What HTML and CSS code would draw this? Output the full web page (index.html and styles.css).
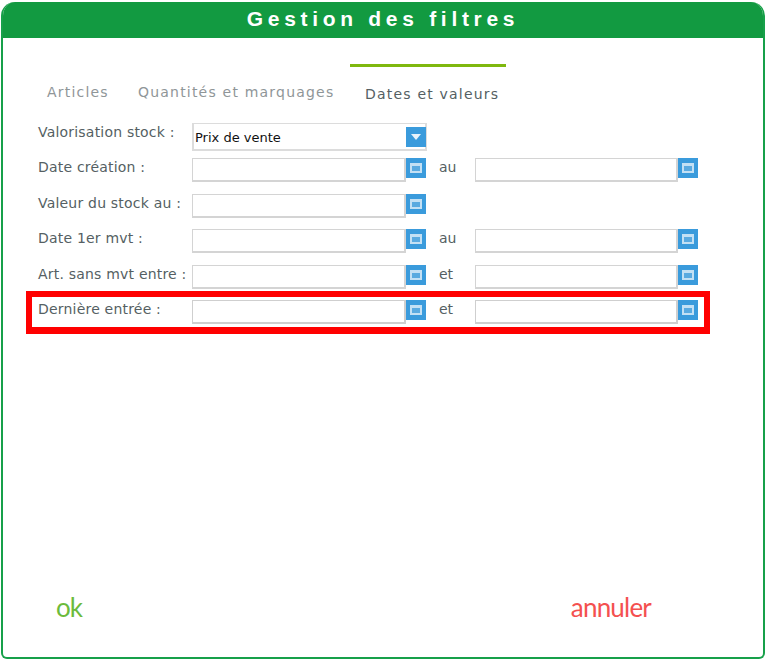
FILE: index.html
```html
<!DOCTYPE html>
<html lang="fr">
<head>
    <meta charset="UTF-8">
    <title>Gestion des filtres</title>
    <link rel="stylesheet" href="styles.css">
</head>
<body>

    <div class="window">
        <h1 class="title">Gestion des filtres</h1>

        <!-- Tabs -->
        <div class="tabs">
            <div class="tab tab-articles">Articles</div>
            <div class="tab tab-quantites">Quantités et marquages</div>
            <div class="tab tab-active">Dates et valeurs</div>
        </div>

        <!-- Filter rows -->
        <div class="form">
            <div class="row row-select">
                <label class="label">Valorisation stock :</label>
                <div class="select">
                    <span class="select-value">Prix de vente</span>
                    <span class="btn btn-select">
                        <svg width="10" height="6" viewBox="0 0 10 6"><path d="M0 0h10L5 6z" fill="#e8f3fb"/></svg>
                    </span>
                </div>
            </div>
            <div class="row">
                <label class="label">Date création :</label>
                <div class="field"><input class="input" type="text"><span class="btn"><i class="cal"></i></span></div>
                <span class="sep">au</span>
                <div class="field field-2"><input class="input" type="text"><span class="btn"><i class="cal"></i></span></div>
            </div>
            <div class="row">
                <label class="label">Valeur du stock au :</label>
                <div class="field"><input class="input" type="text"><span class="btn"><i class="cal"></i></span></div>
            </div>
            <div class="row">
                <label class="label">Date 1er mvt :</label>
                <div class="field"><input class="input" type="text"><span class="btn"><i class="cal"></i></span></div>
                <span class="sep">au</span>
                <div class="field field-2"><input class="input" type="text"><span class="btn"><i class="cal"></i></span></div>
            </div>
            <div class="row">
                <label class="label">Art. sans mvt entre :</label>
                <div class="field"><input class="input" type="text"><span class="btn"><i class="cal"></i></span></div>
                <span class="sep">et</span>
                <div class="field field-2"><input class="input" type="text"><span class="btn"><i class="cal"></i></span></div>
            </div>
            <div class="row row-marked">
                <label class="label">Dernière entrée :</label>
                <div class="field"><input class="input" type="text"><span class="btn"><i class="cal"></i></span></div>
                <span class="sep">et</span>
                <div class="field field-2"><input class="input" type="text"><span class="btn"><i class="cal"></i></span></div>
                <div class="marker"></div>
            </div>
        </div>

        <!-- Actions -->
        <div class="actions">
            <span class="action action-ok">ok</span>
            <span class="action action-cancel">annuler</span>
        </div>
    </div>

</body>
</html>
```

FILE: styles.css
```css
* {
    margin: 0;
    padding: 0;
    box-sizing: border-box;
}

body {
    background-color: #fff;
    padding: 2px 1px;
    font-family: 'DejaVu Sans', sans-serif;
    color: #555f63;
}

.window {
    display: flex;
    flex-direction: column;
    height: 657px;
    border: 2px solid #17a04a;
    border-top: none;
    border-radius: 14px 14px 6px 6px;
    overflow: hidden;
}

.title {
    height: 36px;
    line-height: 34px;
    margin: 0 -2px;
    text-align: center;
    background-color: #129a41;
    color: #fff;
    font-family: 'Liberation Sans', sans-serif;
    font-size: 21px;
    font-weight: bold;
    letter-spacing: 4.7px;
}

.tabs {
    display: flex;
    height: 85px;
    padding-left: 44px;
}

.tab {
    font-size: 14px;
    letter-spacing: 1.2px;
    color: #8f9698;
    padding-top: 46px;
}

.tab-articles {
    width: 91px;
}

.tab-quantites {
    width: 212px;
}

.tab-active {
    width: 156px;
    height: 29px;
    padding-top: 0;
    margin-top: 26px;
    padding-left: 15px;
    border-top: 3px solid #7fb80e;
    color: #555f63;
    line-height: 54px;
    white-space: nowrap;
}

.form {
    display: flex;
    flex-direction: column;
    gap: 11.5px;
    padding-left: 35px;
}

.row {
    position: relative;
    display: flex;
    align-items: flex-start;
    height: 24px;
}

.row-select {
    height: 23.5px;
}

.label {
    width: 154px;
    font-size: 14px;
    line-height: 18px;
    letter-spacing: 0.2px;
    white-space: nowrap;
}

.select {
    display: flex;
    justify-content: space-between;
    width: 235px;
    height: 28px;
    padding-top: 3px;
    border: 2px solid #dcdcdc;
    border-top-width: 1px;
    background-color: #fff;
}

.select-value {
    padding-top: 1px;
    padding-left: 1px;
    font-size: 13px;
    line-height: 20px;
    color: #111;
}

.field {
    display: flex;
    width: 234px;
}

.field-2 {
    width: 223px;
}

.input {
    flex: 1;
    min-width: 0;
    height: 24px;
    border: 1px solid #d4d4d4;
    border-bottom-width: 2px;
    border-right-width: 2px;
    background-color: #fff;
}

.btn {
    display: flex;
    align-items: center;
    justify-content: center;
    flex: none;
    width: 20px;
    height: 20px;
    background-color: #3a9bdc;
}

.btn-select {
    margin-right: -1px;
}

.cal {
    display: block;
    width: 12px;
    height: 10px;
    border: 2px solid #c3e0f4;
    border-top-width: 3px;
    background-color: #5aaae0;
}

.sep {
    width: 49px;
    padding-left: 13px;
    font-size: 14px;
    line-height: 18px;
}

.row-marked .input {
    border-color: #cfcfcf;
}

/* red highlight drawn over the last row */
.marker {
    position: absolute;
    left: -12px;
    top: -9px;
    width: 684px;
    height: 43px;
    border: 6px solid #ff0000;
    border-bottom-width: 7px;
    pointer-events: none;
}

.actions {
    display: flex;
    justify-content: space-between;
    margin-top: auto;
    padding: 0 112px 36px 53px;
}

.action {
    font-family: 'Lato', sans-serif;
    font-size: 26px;
    font-weight: 400;
    line-height: 28px;
}

.action-ok {
    color: #6cbb3c;
    letter-spacing: -1px;
}

.action-cancel {
    color: #f4504f;
    letter-spacing: -0.8px;
}
```
